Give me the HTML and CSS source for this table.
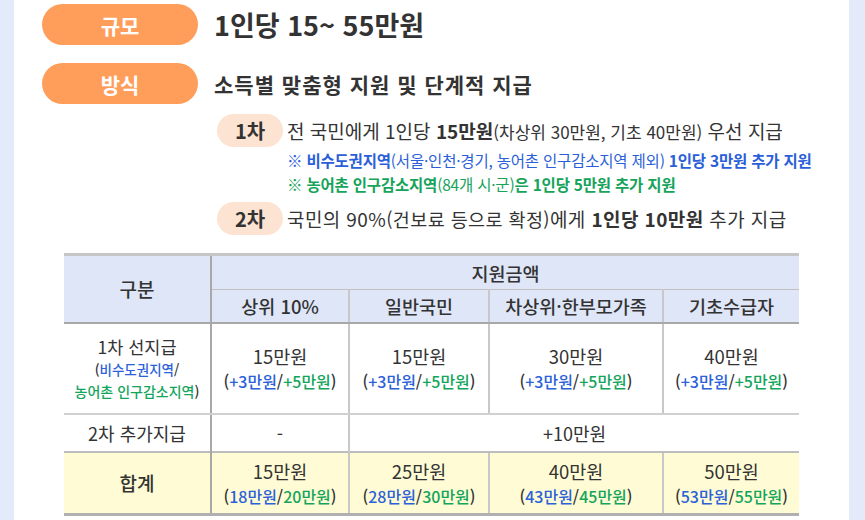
FILE: index.html
```html
<!DOCTYPE html>
<html lang="ko">
<head>
<meta charset="utf-8">
<link rel="stylesheet" href="styles.css">
</head>
<body>
<div class="page">
  <div class="panel">
    <div class="row">
      <span class="pill">규모</span>
      <span class="big">1인당 15~ 55만원</span>
    </div>
    <div class="row row2">
      <span class="pill">방식</span>
      <span class="mid">소득별 맞춤형 지원 및 단계적 지급</span>
    </div>
    <div class="steps">
      <div class="step">
        <span class="badge">1차</span>
        <div class="step-body">
          <div class="line">전 국민에게 1인당 <b>15만원</b><span class="paren">(차상위 30만원, 기초 40만원)</span> 우선 지급</div>
          <div class="note blue">※ 비수도권지역<span class="light">(서울·인천·경기, 농어촌 인구감소지역 제외)</span> 1인당 3만원 추가 지원</div>
          <div class="note green">※ 농어촌 인구감소지역<span class="light">(84개 시·군)</span>은 1인당 5만원 추가 지원</div>
        </div>
      </div>
      <div class="step step2">
        <span class="badge">2차</span>
        <div class="step-body">
          <div class="line wide">국민의 90%<span class="paren">(건보료 등으로 확정)</span>에게 <b>1인당 10만원</b> 추가 지급</div>
        </div>
      </div>
    </div>
    <table class="tbl">
      <colgroup>
        <col class="c1"><col class="c2"><col class="c3"><col class="c4"><col class="c5">
      </colgroup>
      <thead>
        <tr class="h1">
          <th rowspan="2" class="first">구분</th>
          <th colspan="4">지원금액</th>
        </tr>
        <tr class="h2">
          <th>상위 10%</th>
          <th>일반국민</th>
          <th>차상위·한부모가족</th>
          <th>기초수급자</th>
        </tr>
      </thead>
      <tbody>
        <tr class="r1">
          <td class="first">1차 선지급<div class="sub">(<span class="b">비수도권지역</span>/</div><div class="sub"><span class="g">농어촌 인구감소지역</span>)</div></td>
          <td>15만원<div class="amt">(<span class="b">+3만원</span>/<span class="g">+5만원</span>)</div></td>
          <td>15만원<div class="amt">(<span class="b">+3만원</span>/<span class="g">+5만원</span>)</div></td>
          <td>30만원<div class="amt">(<span class="b">+3만원</span>/<span class="g">+5만원</span>)</div></td>
          <td>40만원<div class="amt">(<span class="b">+3만원</span>/<span class="g">+5만원</span>)</div></td>
        </tr>
        <tr class="r2">
          <td class="first">2차 추가지급</td>
          <td>-</td>
          <td colspan="3">+10만원</td>
        </tr>
        <tr class="total">
          <td class="first">합계</td>
          <td>15만원<div class="amt">(<span class="b">18만원</span>/<span class="g">20만원</span>)</div></td>
          <td>25만원<div class="amt">(<span class="b">28만원</span>/<span class="g">30만원</span>)</div></td>
          <td>40만원<div class="amt">(<span class="b">43만원</span>/<span class="g">45만원</span>)</div></td>
          <td>50만원<div class="amt">(<span class="b">53만원</span>/<span class="g">55만원</span>)</div></td>
        </tr>
      </tbody>
    </table>
  </div>
</div>
</body>
</html>
```

FILE: styles.css
```css
* { box-sizing: border-box; }
html, body {
  margin: 0;
  padding: 0;
  background: #e3ebfb;
}
body {
  font-family: "Noto Sans CJK KR", "Noto Sans", sans-serif;
  color: #333;
}
.page {
  width: 865px;
  height: 520px;
  overflow: hidden;
  padding: 0 16px 0 14px;
}
.panel {
  background: #fff;
  height: 520px;
  padding: 4px 0 0 28px;
  display: flex;
  flex-direction: column;
}
.row {
  display: flex;
  align-items: center;
  gap: 16px;
  height: 41px;
}
.row2 { margin-top: 18px; }
.pill {
  width: 156px;
  height: 41px;
  border-radius: 21px;
  background: #ff9d5a;
  color: #fff;
  font-weight: 700;
  font-size: 21px;
  display: flex;
  align-items: center;
  justify-content: center;
}
.big {
  font-size: 27px;
  font-weight: 700;
  letter-spacing: 0;
  color: #333;
}
.mid {
  font-size: 21px;
  font-weight: 700;
  letter-spacing: 1px;
  color: #333;
}
.steps {
  margin: 10px 0 0 175px;
  display: flex;
  flex-direction: column;
}
.step {
  display: flex;
  align-items: flex-start;
  gap: 4px;
}
.step2 { margin-top: 6px; }
.badge {
  width: 66px;
  height: 33px;
  border-radius: 17px;
  background: #fde4d2;
  font-weight: 700;
  font-size: 20px;
  display: flex;
  align-items: center;
  justify-content: center;
  color: #333;
  flex: none;
}
.line {
  font-size: 19px;
  line-height: 33px;
  letter-spacing: 0;
  white-space: nowrap;
}
.line b { font-weight: 700; }
.paren { font-size: 17px; }
.line.wide { letter-spacing: 0.4px; }
.line.wide .paren { font-size: 18.5px; }
.note {
  font-size: 15.5px;
  font-weight: 700;
  line-height: 24px;
  letter-spacing: -0.2px;
  white-space: nowrap;
}
.note .light { font-weight: 400; }
.blue { color: #2b5fd9; }
.green { color: #16a35a; }

.tbl {
  margin: 17px 0 0 22px;
  width: 735px;
  border-collapse: collapse;
  table-layout: fixed;
  font-size: 18.5px;
  text-align: center;
}
.c1 { width: 147px; }
.c2 { width: 138px; }
.c3 { width: 140px; }
.c4 { width: 174px; }
.c5 { width: 136px; }
.tbl th, .tbl td {
  padding: 0;
  border-left: 2px solid #c8c8c8;
  vertical-align: middle;
}
.tbl .first { border-left: none; border-right: 2px solid #a8a8a8; }
.tbl th {
  background: #dfe6f8;
  font-weight: 500;
  color: #333;
}
.tbl thead tr.h1 th { height: 35px; border-top: 3px solid #c6c6c6; }
.tbl thead tr.h1 th + th { border-bottom: 1px solid #c0c0c0; }
.tbl thead tr.h2 th { height: 33px; border-bottom: 2px solid #a8a8a8; }
.tbl thead th.first { font-size: 19px; border-bottom: 2px solid #a8a8a8; }
.tbl tr.r1 td { height: 91px; border-bottom: 2px solid #d0d0d0; font-size: 18.5px; line-height: 26px; }
.tbl tr.r1 td.first { line-height: 23px; font-size: 17.5px; }
.tbl tr.r2 td { height: 38px; font-size: 18px; }
.tbl tr.total td { height: 63px; background: #fffcd5; border-top: 2px solid #bdbdbd; border-bottom: 3px solid #b0b0b0; font-size: 18.5px; line-height: 26px; }
.tbl tr.total td.first { font-weight: 500; font-size: 19px; }
.sub { font-size: 13.5px; line-height: 22px; font-weight: 500; }
.r1 .first .sub + .sub { font-size: 14px; }
.amt { font-size: 16px; font-weight: 500; line-height: 24px; }
.b { color: #2b62d9; }
.g { color: #14a55c; }
```
